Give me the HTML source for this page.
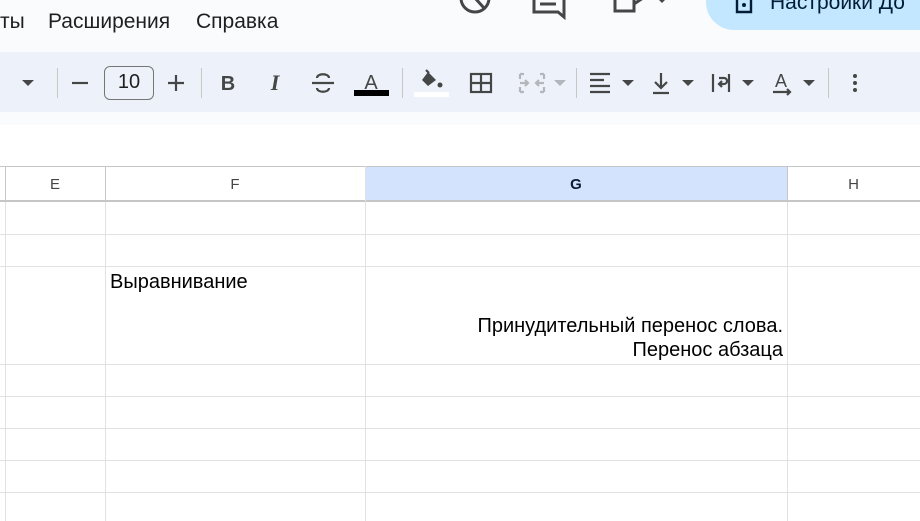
<!DOCTYPE html>
<html><head><meta charset="utf-8"><style>
*{margin:0;padding:0;box-sizing:border-box}
body{width:920px;height:521px;overflow:hidden;background:#fff;font-family:"Liberation Sans",Arial,sans-serif;position:relative}
.a{position:absolute}
.menu{top:10px;font-size:21px;color:#1f1f1f}
.sep{position:absolute;top:68px;width:1px;height:30px;background:#c7c7c7}
.hl{position:absolute;left:0;width:920px;height:1px;background:#e1e1e1}
.vl{position:absolute;width:1px;background:#e1e1e1;top:166px;height:355px}
.hd{position:absolute;top:166px;height:36px;font-size:15px;color:#444;text-align:center;line-height:37px}
</style></head><body>
<div class="a" style="left:0;top:0;width:920px;height:52px;background:#f9fbfd"></div>
<div class="a menu" style="left:0">ты</div>
<div class="a menu" style="left:48px">Расширения</div>
<div class="a menu" style="left:196px">Справка</div>
<svg class="a" style="left:458px;top:0" width="220" height="20" viewBox="0 0 220 20" fill="none" stroke="#444746" stroke-width="3">
<circle cx="17" cy="-2" r="14"/><path d="M17 -2 L26 8"/>
<path d="M76 -2 V12 H100 L106 17 V-2"/><path d="M82 4 H98"/>
<path d="M157 -2 V11 H176 V-2"/><path d="M176 4 L185 -2"/>
<path d="M200 -1 l4 4 l4 -4" fill="#444746" stroke="none"/>
</svg>
<div class="a" style="left:706px;top:-30px;width:240px;height:60px;border-radius:28px;background:#c2e7ff"></div>
<svg class="a" style="left:735px;top:0" width="20" height="14"><path d="M2 0 V12 H16 V0" fill="none" stroke="#001d35" stroke-width="2.4"/><circle cx="9" cy="5" r="2" fill="#001d35"/></svg>
<div class="a" style="left:770px;top:-9px;font-size:21px;color:#001d35;white-space:nowrap">Настройки До</div>
<div class="a" style="left:0;top:52px;width:920px;height:60px;background:#edf2fa"></div>
<div class="a" style="left:0;top:112px;width:920px;height:13px;background:#f9fbfd"></div>
<div class="sep" style="left:57px"></div><div class="sep" style="left:201px"></div><div class="sep" style="left:402px"></div><div class="sep" style="left:576px"></div><div class="sep" style="left:828px"></div>
<div class="a" style="left:104px;top:66px;width:50px;height:34px;border:1.5px solid #747775;border-radius:6px;font-size:20px;color:#1f1f1f;text-align:center;line-height:31px">10</div>
<svg class="a" style="left:0;top:60px" width="920" height="48" viewBox="0 0 920 48" fill="none" stroke="#444746" stroke-width="2.2">
<path d="M22 20 h12 l-6 6z" fill="#444746" stroke="none"/>
<path d="M72 23 h16"/><path d="M168 23 h16 M176 15 v16"/>
<text x="228" y="30" font-family="Liberation Sans" font-weight="bold" font-size="20" fill="#444746" stroke="none" text-anchor="middle">B</text>
<text x="275" y="30" font-family="Liberation Serif" font-style="italic" font-weight="bold" font-size="22" fill="#444746" stroke="none" text-anchor="middle">I</text>
<path d="M312 23 h22 M317 18 c0-5 12-5 12 0 M317 28 c0 5 12 5 12 0"/>
<text x="371" y="29" font-family="Liberation Sans" font-size="20" fill="#444746" stroke="none" text-anchor="middle">A</text>
<rect x="354" y="30" width="35" height="6" fill="#000" stroke="none"/>
<path d="M428 12 l-6 8 l6 6 l8 -6z" fill="#444746" stroke="none"/><path d="M426 10 l3 3"/><circle cx="440" cy="25" r="2.5" fill="#444746" stroke="none"/>
<rect x="414" y="32" width="35" height="5" fill="#fff" stroke="none"/>
<rect x="471" y="14" width="20" height="18"/><path d="M471 23 h20 M481 14 v18"/>
<g stroke="#b3b6ba"><path d="M520 14 h4 M520 32 h4 M520 14 v5 M520 27 v5 M544 14 h-4 M544 32 h-4 M544 14 v5 M544 27 v5 M520 23 h8 M525 20 l3 3 l-3 3 M544 23 h-8 M539 20 l-3 3 l3 3"/></g>
<path d="M554 20 h12 l-6 6z" fill="#b3b6ba" stroke="none"/>
<path d="M590 14 h20 M590 20 h14 M590 26 h20 M590 32 h20"/>
<path d="M622 20 h12 l-6 6z" fill="#444746" stroke="none"/>
<path d="M653 33 h16 M661 13 v15 M655 22 l6 6 l6 -6"/>
<path d="M682 20 h12 l-6 6z" fill="#444746" stroke="none"/>
<path d="M713 14 v18 M729 14 v18 M719 18 h5 a3 3 0 0 1 0 6 h-4 M722 21 l-3 3 l3 3"/>
<path d="M742 20 h12 l-6 6z" fill="#444746" stroke="none"/>
<text x="781" y="27" font-family="Liberation Sans" font-size="18" fill="#444746" stroke="none" text-anchor="middle">A</text>
<path d="M773 32 h17 M787 29 l3 3 l-3 3"/>
<path d="M803 20 h12 l-6 6z" fill="#444746" stroke="none"/>
<circle cx="855" cy="16" r="2" fill="#444746" stroke="none"/><circle cx="855" cy="23" r="2" fill="#444746" stroke="none"/><circle cx="855" cy="30" r="2" fill="#444746" stroke="none"/>
</svg>
<div class="a" style="left:365px;top:166px;width:422px;height:36px;background:#d3e3fd"></div>
<div class="hl" style="top:166px;background:#c4c7c5"></div>
<div class="hl" style="top:200px;height:2px;background:#c4c7c5"></div>
<div class="hl" style="top:234px"></div><div class="hl" style="top:266px"></div><div class="hl" style="top:364px"></div><div class="hl" style="top:396px"></div><div class="hl" style="top:428px"></div><div class="hl" style="top:460px"></div><div class="hl" style="top:492px"></div>
<div class="vl" style="left:5px"></div><div class="vl" style="left:105px"></div><div class="vl" style="left:365px"></div><div class="vl" style="left:787px"></div>
<div class="a" style="left:5px;top:166px;width:1px;height:36px;background:#c4c7c5"></div>
<div class="a" style="left:105px;top:166px;width:1px;height:36px;background:#c4c7c5"></div>
<div class="a" style="left:787px;top:166px;width:1px;height:36px;background:#c4c7c5"></div>
<div class="hd" style="left:5px;width:100px">E</div>
<div class="hd" style="left:105px;width:260px">F</div>
<div class="hd" style="left:365px;width:422px;color:#0b1c3a;font-weight:bold">G</div>
<div class="hd" style="left:787px;width:133px">H</div>
<div class="a" style="left:110px;top:271px;font-size:20px;color:#000">Выравнивание</div>
<div class="a" style="left:365px;top:314px;width:418px;text-align:right;font-size:20px;line-height:24px;color:#000">Принудительный перенос слова.<br>Перенос абзаца</div>
</body></html>
